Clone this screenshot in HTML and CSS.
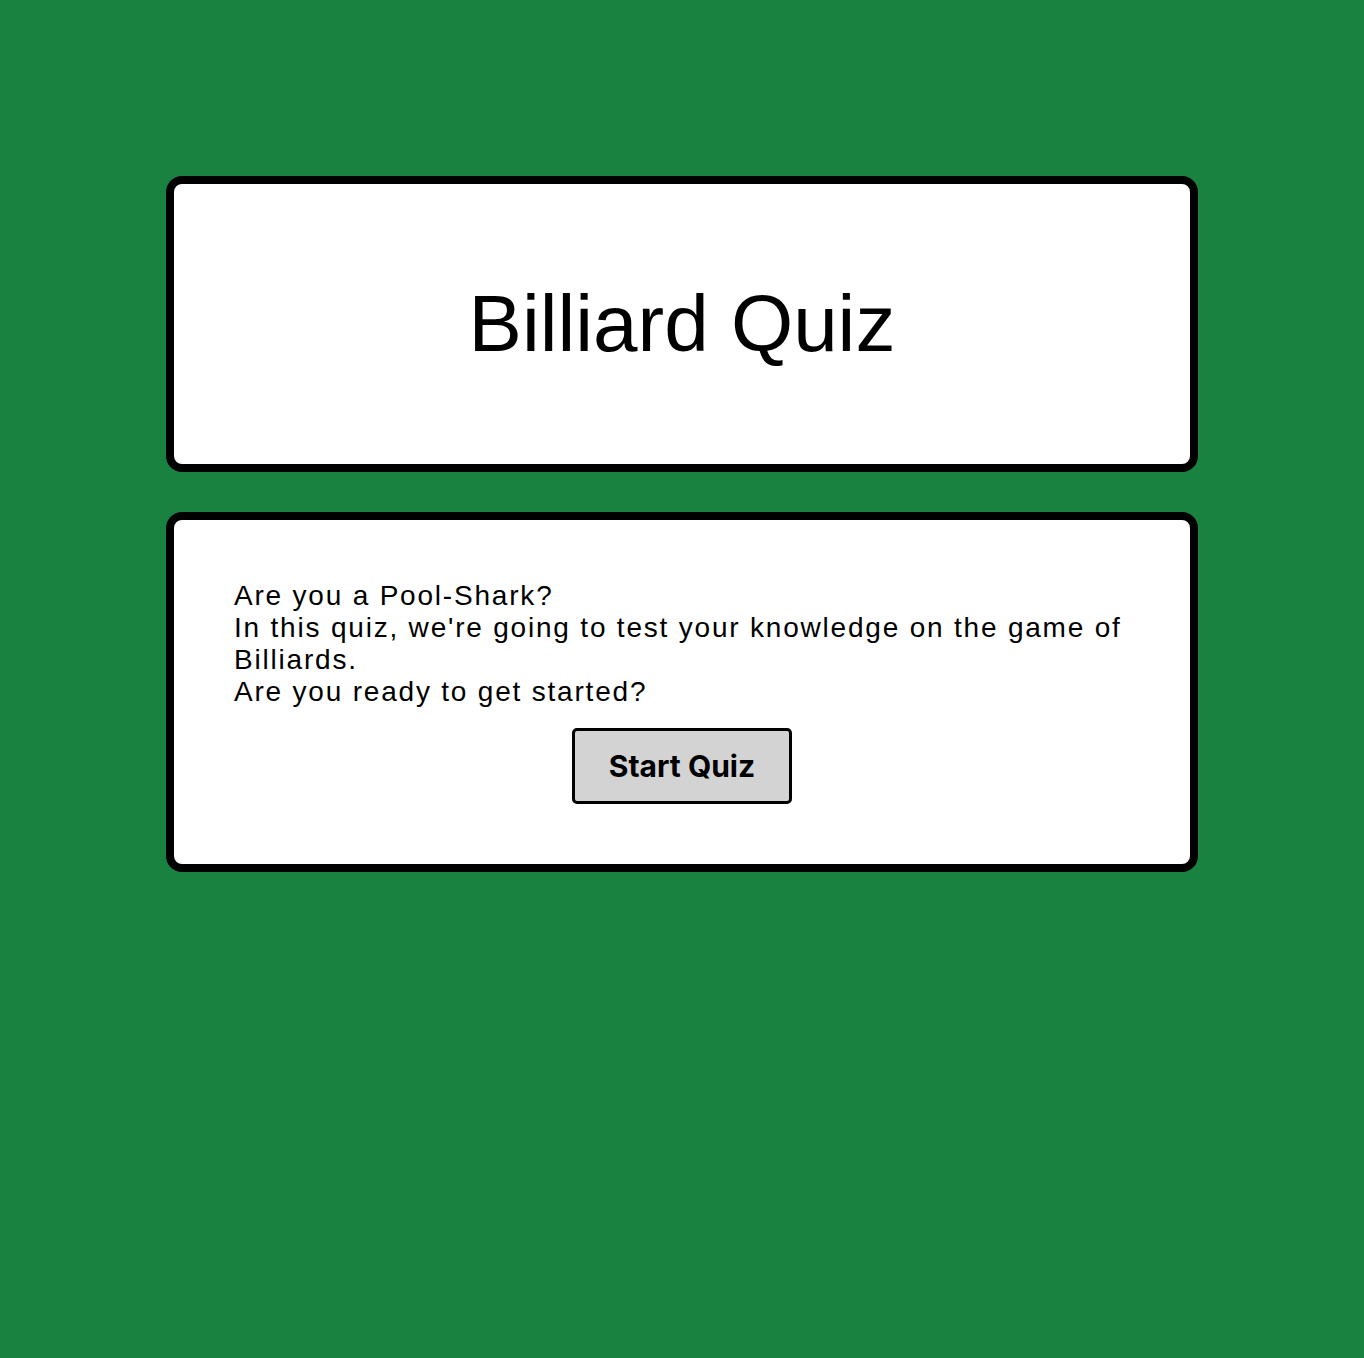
FILE: index.html
```html
<!DOCTYPE html>
<html lang="en">
<head>
<meta charset="utf-8">
<title>Billiard Quiz</title>
<link rel="stylesheet" href="styles.css">
</head>
<body>
<main class="page">
  <header class="card card-title">
    <h1 class="title">Billiard Quiz</h1>
  </header>
  <section class="card card-intro">
    <p class="intro">Are you a Pool-Shark?<br>In this quiz, we're going to test your knowledge on the game of Billiards.<br>Are you ready to get started?</p>
    <div class="actions">
      <button class="start-btn" type="button">Start Quiz</button>
    </div>
  </section>
</main>
</body>
</html>
```
FILE: styles.css
```css
html, body {
  margin: 0;
  padding: 0;
}
body {
  background: #198240;
  font-family: "Liberation Sans", Arial, sans-serif;
  color: #000;
  min-height: 1358px;
}
.page {
  width: 1032px;
  margin: 0 auto;
  padding-top: 176px;
  display: flex;
  flex-direction: column;
  gap: 40px;
}
.card {
  background: #fff;
  border: 8px solid #000;
  border-radius: 16px;
}
.card-title {
  padding: 94px 0;
}
.title {
  margin: 0;
  font-size: 80px;
  font-weight: 400;
  text-align: center;
  line-height: 92px;
}
.card-intro {
  padding: 60px;
}
.intro {
  margin: 0;
  font-size: 28px;
  line-height: 32px;
  letter-spacing: 1.8px;
}
.actions {
  display: flex;
  justify-content: center;
  margin-top: 20px;
}
.start-btn {
  width: 220px;
  height: 76px;
  background: #d3d3d3;
  border: 3px solid #000;
  border-radius: 5px;
  font-family: Inter, "Liberation Sans", sans-serif;
  font-weight: 700;
  font-size: 30px;
  color: #000;
  padding: 0;
}
```
